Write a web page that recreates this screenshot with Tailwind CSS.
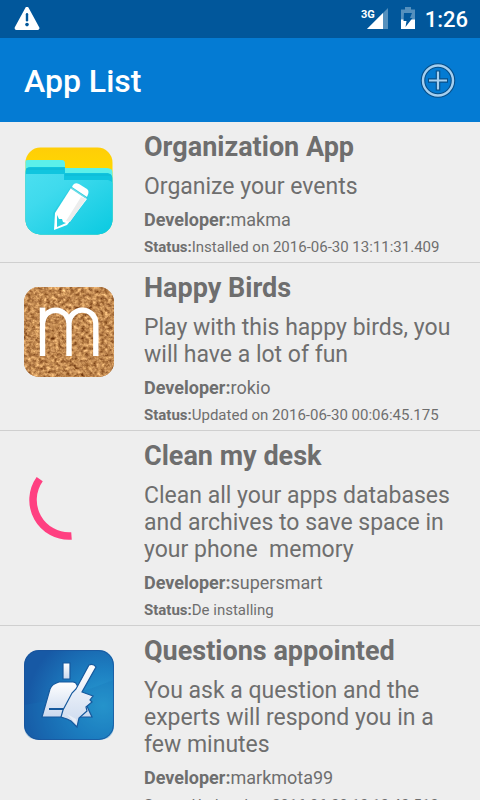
<!DOCTYPE html>
<html lang="en">
<head>
<meta charset="utf-8">
<meta name="viewport" content="width=device-width, initial-scale=1">
<title>App List</title>
<script src="https://cdn.jsdelivr.net/npm/@tailwindcss/browser@4"></script>
</head>
<body class="flex h-screen flex-col overflow-hidden bg-[#eeeeee] font-[Roboto,sans-serif] text-[#6e6e6e]">
<div class="flex h-[38px] shrink-0 items-center bg-[#01579b] pr-3 pl-[14px] text-white">
  <svg class="h-6 w-[26px]" viewBox="0 0 26 24" role="img" aria-label="Warning"><path d="M13 1.6 23.6 21.2H2.4Z" fill="#fff" stroke="#fff" stroke-width="3.6" stroke-linejoin="round"/><path d="M13 7.2v6" stroke="#01579b" stroke-width="2.4" stroke-linecap="round"/><circle cx="13" cy="17.6" r="1.8" fill="#01579b"/></svg>
  <div class="ml-auto flex items-center">
    <svg class="h-6 w-7" viewBox="0 0 28 24" role="img" aria-label="3G signal"><path d="M6 22 27 1V22Z" fill="#5590bd"/><path d="M6 22 22 6V22Z" fill="#fff"/><path d="M0 0H15V9L13 12H0Z" fill="#01579b"/><text x="0" y="11" font-family="Roboto" font-weight="700" font-size="11" fill="#fff">3G</text></svg>
    <svg class="ml-3 h-6 w-[14px]" viewBox="0 0 14 24" role="img" aria-label="Battery charging"><path d="M0 2.500H4V0H10V2.500H14V22H0Z" fill="#5590bd"/><path d="M0 12.500H14V22H0Z" fill="#fff"/><path d="M3 6H11L9 11H11.500L4.500 20 5.500 14H2.500Z" fill="#01579b"/></svg>
    <time class="ml-[10px] pt-0.5 text-[22px] leading-6 font-medium">1:26</time>
  </div>
</div>
<header class="flex h-21 shrink-0 items-center justify-between bg-[#047bd3] px-6 text-white">
  <h1 class="pt-0.5 text-[32px] leading-9 font-medium">App List</h1>
  <button type="button" aria-label="Add app" class="-mr-1 h-11 w-11">
    <svg class="m-auto h-9 w-9" viewBox="0 0 36 36" fill="none"><circle cx="18" cy="18.500" r="15" stroke="#08508a" stroke-width="4.600"/><path d="M18 8.500V28.500M8 18.500H28" stroke="#08508a" stroke-width="4.600"/><circle cx="18" cy="18.500" r="15" stroke="#a4cff0" stroke-width="2.400"/><path d="M18 9.500V27.500M9 18.500H27" stroke="#a4cff0" stroke-width="2.200"/></svg>
  </button>
</header>
<main class="min-h-0 flex-1 overflow-hidden">
<ul>
  <li class="flex gap-[30px] border-b border-[#cfcfcf] pt-[9px] pr-4 pb-[6px] pl-6">
    <svg class="mt-[15px] h-[90px] w-[90px] shrink-0" viewBox="0 0 90 90" role="img" aria-label="Organization App icon">
      <defs>
        <linearGradient id="folder" x1="0" y1="0" x2="1" y2="1"><stop offset="0" stop-color="#4bdff0"/><stop offset=".3" stop-color="#3fdaed"/><stop offset="1" stop-color="#08c9e0"/></linearGradient>
        <linearGradient id="yellow" x2="0" y2="1"><stop stop-color="#ffcd08"/><stop offset=".3" stop-color="#ffd800"/></linearGradient>
        <clipPath id="round"><rect x="1.500" y="1.500" width="87" height="87" rx="15"/></clipPath>
      </defs>
      <g clip-path="url(#round)"><rect width="90" height="90" fill="url(#yellow)"/>
      <path d="M0 15Q1 14 4 14H38Q41 14 41 18V22H83Q89 22 89 28V90H0Z" fill="#5cf0ea"/>
      <path d="M1 26Q2 21 6 21H41V27H84Q89 28 89 35V90H0Z" fill="#10c5df"/>
      <path d="M0 28H40V34H84Q89 35 90 40V90H0Z" fill="url(#folder)"/>
      <path d="M41 29H87M2 23H40" stroke="#0fb7d3" stroke-width="1"/></g>
      <path d="M29 67 46 42Q50 38 55 40L62 45Q66 48 63 53L46 77 31 83Z" fill="#18b8cc" opacity=".3"/>
      <path d="M31 67 47 42 63 53 47 74 43 79 30 84Z" fill="#fff"/><path d="M49 39Q51 36 55 38L63 43Q66 45 63 51L48 41Z" fill="#fff"/>
      <path d="m33 69 2 4 3 0 1 3 3 1-9 4Z" fill="#28d0e1"/><path d="m47 42 15 10" stroke="#70dce6" stroke-width="1.500"/><path d="m57 51-15 24 4 1 16-23Z" fill="#eceded"/>
    </svg>
    <article class="min-w-0 flex-1">
      <h2 class="text-[27px] leading-8 font-bold">Organization App</h2>
      <p class="mt-[10px] text-[23px] leading-[27px]">Organize your events</p>
      <p class="mt-[9px] text-[18px] leading-[21px]"><b>Developer:</b>makma</p>
      <p class="mt-2 text-[15px] leading-[18px]"><b>Status:</b>Installed on 2016-06-30 13:11:31.409</p>
    </article>
  </li>
  <li class="flex gap-[30px] border-b border-[#cfcfcf] pt-[9px] pr-4 pb-[6px] pl-6">
    <svg class="mt-[15px] h-[90px] w-[90px] shrink-0" viewBox="0 0 90 90" role="img" aria-label="Happy Birds icon">
      <defs><clipPath id="cork"><rect width="90" height="90" rx="15"/></clipPath>
      <filter id="grain" x="0" y="0" width="1" height="1" color-interpolation-filters="sRGB"><feTurbulence type="fractalNoise" baseFrequency=".26 .3" numOctaves="3" seed="7"/><feColorMatrix values=".7 .4 0 0 .2 .7 .4 0 0 -.02 .55 .35 0 0 -.14 0 0 0 0 1"/></filter></defs>
      <g clip-path="url(#cork)"><rect width="90" height="90" fill="#bd8348"/><rect width="90" height="90" filter="url(#grain)"/></g>
      <path d="M18.500 69V20.500M18.500 36.500A13.250 13.250 0 0 1 45 36.500V69M45 36.500A13.400 13.400 0 0 1 71.800 36.500V69" fill="none" stroke="#fff" stroke-width="5.400"/>
    </svg>
    <article class="min-w-0 flex-1">
      <h2 class="text-[27px] leading-8 font-bold">Happy Birds</h2>
      <p class="mt-[10px] text-[23px] leading-[27px]">Play with this happy birds, you will have a lot of fun</p>
      <p class="mt-[9px] text-[18px] leading-[21px]"><b>Developer:</b>rokio</p>
      <p class="mt-2 text-[15px] leading-[18px]"><b>Status:</b>Updated on 2016-06-30 00:06:45.175</p>
    </article>
  </li>
  <li class="flex gap-[30px] border-b border-[#cfcfcf] pt-[9px] pr-4 pb-[6px] pl-6">
    <svg class="mt-[15px] h-[90px] w-[90px] shrink-0" viewBox="0 0 90 90" role="progressbar" aria-label="De installing"><path d="M15.700 24.100A36 36 0 0 0 47.500 80.900" fill="none" stroke="#ff4081" stroke-width="7.500"/></svg>
    <article class="min-w-0 flex-1">
      <h2 class="text-[27px] leading-8 font-bold">Clean my desk</h2>
      <p class="mt-[10px] text-[23px] leading-[27px] whitespace-pre-wrap">Clean all your apps databases and archives to save space in your phone  memory</p>
      <p class="mt-[9px] text-[18px] leading-[21px]"><b>Developer:</b>supersmart</p>
      <p class="mt-2 text-[15px] leading-[18px]"><b>Status:</b>De installing</p>
    </article>
  </li>
  <li class="flex gap-[30px] border-b border-[#cfcfcf] pt-[9px] pr-4 pb-[6px] pl-6">
    <svg class="mt-[15px] h-[90px] w-[90px] shrink-0" viewBox="0 0 90 90" role="img" aria-label="Questions appointed icon">
      <defs><radialGradient id="blue" cx=".88" cy=".62" r=".85"><stop stop-color="#2a9ed2"/><stop offset=".45" stop-color="#1d80c2"/><stop offset="1" stop-color="#1759a5"/></radialGradient><linearGradient id="metal" x2="0" y2="1"><stop stop-color="#fff"/><stop offset="1" stop-color="#cbd9ee"/></linearGradient></defs>
      <rect width="90" height="90" rx="15" fill="url(#blue)"/><path d="M0 55Q45 48 90 30V75Q90 90 75 90H15Q0 90 0 75Z" fill="#1674b8" opacity=".25"/>
      <rect x=".5" y=".5" width="89" height="89" rx="15" fill="none" stroke="#1b529a" opacity=".7"/>
      <g fill="url(#metal)" stroke="#16599d" stroke-width="1.200"><path d="M39 13H46V29H39Z"/><path d="M35 32H49Q52 32 53 35L68 67H18L26 39Q28 34 35 32Z"/><path d="M25 59H41" stroke-width="2"/><path d="M65 15Q69 13 72 17L58 42 69 46 66 50 68 52 62 57 63 61 55 68 53 77 47 71 43 69 37 67 39 60 48 43 52 39Z"/></g>
      <path d="m43 64 9 5 1 6-4-4" fill="#e7edf7"/>
    </svg>
    <article class="min-w-0 flex-1">
      <h2 class="text-[27px] leading-8 font-bold">Questions appointed</h2>
      <p class="mt-[10px] text-[23px] leading-[27px]">You ask a question and the experts will respond you in a few minutes</p>
      <p class="mt-[9px] text-[18px] leading-[21px]"><b>Developer:</b>markmota99</p>
      <p class="mt-2 text-[15px] leading-[18px]"><b>Status:</b>Updated on 2016-06-30 13:13:43.513</p>
    </article>
  </li>
</ul>
</main>
</body>
</html>
